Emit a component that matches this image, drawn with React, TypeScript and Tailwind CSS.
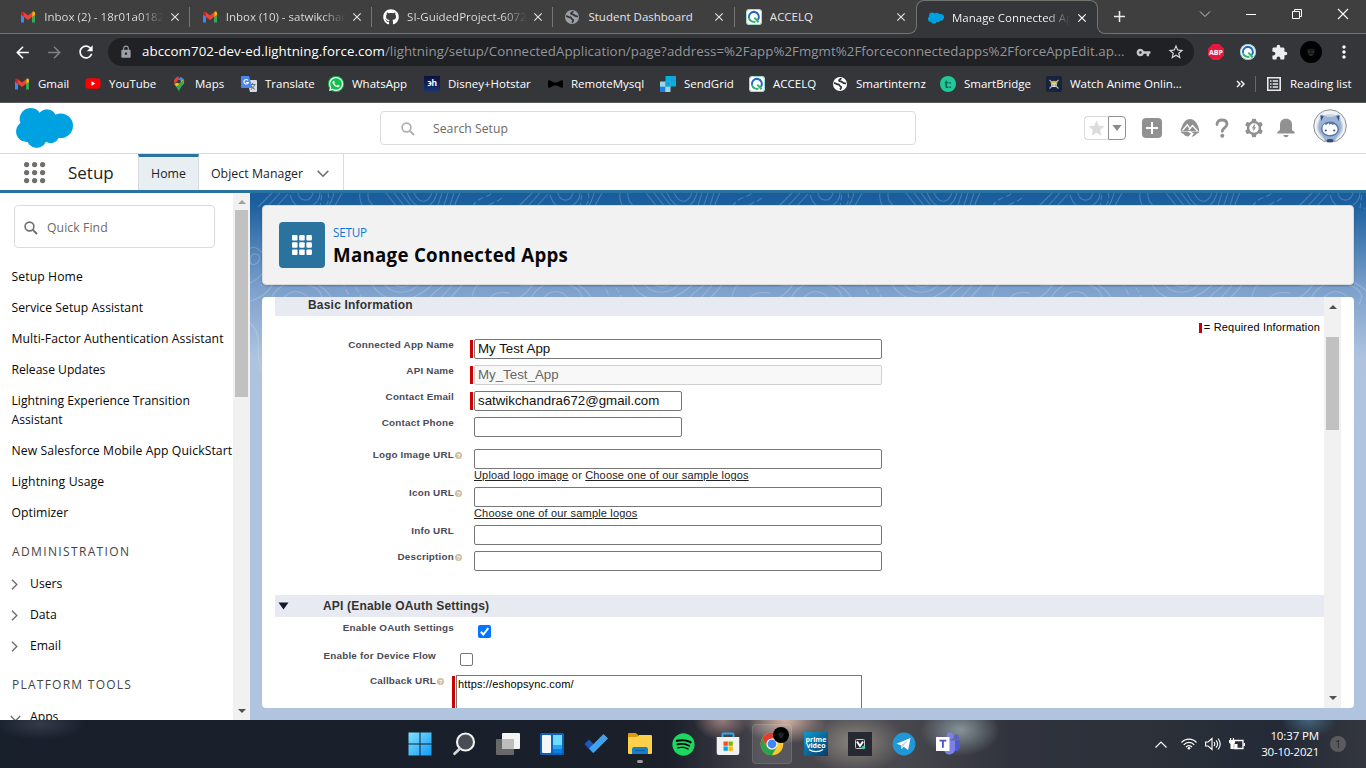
import React from "react";
import {
  MdAdd,
  MdArrowBack,
  MdArrowForward,
  MdClose,
  MdExtension,
  MdLock,
  MdMoreVert,
  MdRefresh,
  MdStar,
  MdStarBorder,
  MdVpnKey,
} from "react-icons/md";
import { FaGithub, FaSpotify, FaWhatsapp, FaYoutube } from "react-icons/fa";

/* ---------- shared glyphs ---------- */

const Gmail = () => (
  <svg width="16" height="16" viewBox="0 0 16 16">
    <path d="M1 4.500V13.500h3V7.200z" fill="#4285f4" />
    <path d="M15 4.500V13.500h-3V7.200z" fill="#34a853" />
    <path d="M12 4.200V8l3-2.300V4.200C15 2.600 13.400 2.200 12.400 3z" fill="#fbbc04" />
    <path d="M4 4.200V8L1 5.700V4.200C1 2.600 2.600 2.200 3.600 3z" fill="#c5221f" />
    <path d="M3.600 3v4.700l4.400 3.300 4.400-3.300V3L8 6.500z" fill="#ea4335" />
  </svg>
);

const Globe = ({ color }: { color: string }) => (
  <svg width="16" height="16" viewBox="0 0 16 16">
    <circle cx="8" cy="8" r="7" fill={color} />
    <path d="M2 7.200c2.200 0 2.700 1.300 4.600 1.300 1.300 0 .5 1.600 1.700 1.800 1.400.3 1 2.200-.4 3.200" fill="none" stroke="#35363a" strokeWidth="1.800" />
    <path d="M9 2.200c-.2 1.500-2 1.200-2 2.300s2 .8 3 1.500c.9.700 1.700 1.600 4 1.300" fill="none" stroke="#35363a" strokeWidth="1.800" />
  </svg>
);

const AccelQ = ({ round }: { round?: boolean }) => (
  <svg width="16" height="16" viewBox="0 0 16 16">
    <rect width="16" height="16" rx={round ? 8 : 3.5} fill="#fff" />
    <rect x=".5" y=".5" width="15" height="15" rx={round ? 7.5 : 3} fill="none" stroke="#43b69a" strokeOpacity=".5" />
    <path d="M3 9A5 5 0 1 1 11.800 11" fill="none" stroke="#2467c4" strokeWidth="2" />
    <path d="M3 9a5 5 0 0 0 6.500 3.600M8.300 8.600l4.300 4.600" fill="none" stroke="#2fb66c" strokeWidth="2" />
  </svg>
);

const Cloud = ({ w, h }: { w: number; h: number }) => (
  <svg width={w} height={h} viewBox="0 0 57 40" fill="#00a1e0">
    <circle cx="14.700" cy="11" r="11" />
    <circle cx="31" cy="10.700" r="9.500" />
    <circle cx="44.700" cy="17.700" r="12.300" />
    <circle cx="10.700" cy="23.500" r="10.600" />
    <circle cx="20.700" cy="29.500" r="10.400" />
    <circle cx="34.700" cy="26.700" r="8.500" />
    <path d="M10 10h30v20H14z" />
  </svg>
);

const Maps = () => (
  <svg width="16" height="16" viewBox="0 0 16 16">
    <path d="M8 .5a5.200 5.200 0 0 0-4 1.900l3 2.600z" fill="#ea4335" />
    <path d="M8 .5c-.5 0 4 .7 4.700 2.900L8.500 8 6 5l3.600-4.300z" fill="#4285f4" />
    <path d="M4 2.400A5.200 5.200 0 0 0 3.600 8L7 4.600z" fill="#ea4335" />
    <path d="M12.700 3.400c1 2 .3 4-1 5.600L5 10.400 3.400 8z" fill="#fbbc04" />
    <path d="M3.500 8 8 15.500c.5-3 2.500-4.500 4-7 .9-1.500 1-3.500.6-5L6 10.500z" fill="#34a853" />
    <circle cx="8" cy="5.600" r="1.900" fill="#35363a" />
  </svg>
);

const Translate = () => (
  <svg width="16" height="16" viewBox="0 0 16 16">
    <path d="M6 4h9a1 1 0 0 1 1 1v10a1 1 0 0 1-1 1H9z" fill="#d9dadd" />
    <path d="M9 8.500h5.500M11.700 7v1.500M13.600 8.500c-.5 2.500-2 4-3.600 5M10.500 10c.7 1.500 2 2.700 3.400 3.400" stroke="#66737d" fill="none" />
    <path d="M1 0h7l3.500 12H1a1 1 0 0 1-1-1V1a1 1 0 0 1 1-1z" fill="#4a86ee" />
    <path d="M7 4.300A2.300 2.300 0 1 0 7.400 6.500H5.200" stroke="#fff" strokeWidth="1.100" fill="none" />
  </svg>
);

const Hotstar = () => (
  <span className="flex h-4 w-4 items-center justify-center bg-gradient-to-b from-[#0c0f3c] to-[#1b3478] font-['Liberation_Sans'] text-[9px] font-bold tracking-[-0.5px] text-white">
    ϶h
  </span>
);

const SendGrid = () => (
  <svg width="16" height="16" viewBox="0 0 16 16">
    <path d="M5.300 0H16v10.700H5.300z" fill="#00b3e3" />
    <path d="M0 5.300h10.700V16H0z" fill="#9dd6e3" />
    <path d="M5.300 5.300h5.400v5.400H5.300zM10.700 0H16v5.300h-5.300z" fill="#1a9fd8" />
    <path d="M0 10.700h5.300V16H0z" fill="#1a82e2" />
    <path d="M0 0h5.300v5.300H0zM10.700 10.700H16V16h-5.300z" fill="#35363a" />
  </svg>
);

const Anime = () => (
  <svg width="16" height="16" viewBox="0 0 16 16">
    <rect width="16" height="16" rx="2" fill="#15233f" />
    <path d="M3.500 4l9 8.500M12.500 4l-9 8.500" stroke="#b9bab4" strokeWidth="1.100" />
    <circle cx="8" cy="8.300" r="2.800" fill="#e8e6dc" />
    <path d="M4.300 7.300c.5-3.500 6.900-3.500 7.400 0z" fill="#d9b640" />
    <path d="M6.500 9h1M8.700 9h1" stroke="#15233f" />
  </svg>
);

/* ---------- browser window ---------- */

const tabs = [
  { icon: <Gmail />, title: "Inbox (2) - 18r01a0182@", fade: true },
  { icon: <Gmail />, title: "Inbox (10) - satwikchand", fade: true },
  { icon: <FaGithub size={16} color="#fff" />, title: "SI-GuidedProject-60723", fade: true },
  { icon: <Globe color="#9aa0a6" />, title: "Student Dashboard", fade: false },
  { icon: <AccelQ />, title: "ACCELQ", fade: false },
];

function TabStrip() {
  return (
    <div className="relative flex h-[34px] shrink-0 border-b border-[#72746f] bg-[#3f3f3f] pl-[9px]">
      {tabs.map((t) => (
        <div key={t.title} className="flex w-[181.400px] items-center">
          <div className="flex w-[180px] items-center pl-[11.300px]">
            {t.icon}
            <span
              className={
                "ml-2 w-[120px] overflow-hidden whitespace-nowrap text-[11.500px] text-[#e3e5e8]" +
                (t.fade ? " bg-gradient-to-r from-[#e3e5e8] from-80% to-[#3f3f3f] bg-clip-text text-transparent" : "")
              }
            >
              {t.title}
            </span>
            <MdClose size={14} color="#dfe1e5" className="ml-[4px]" />
          </div>
          <span className={t.title === "ACCELQ" ? "h-5 w-px" : "ml-auto h-5 w-px bg-[#747678]"} />
        </div>
      ))}
      <div className="relative -mb-px flex h-[34px] w-[182px] items-center rounded-t-lg border border-b-0 border-[#72746f] bg-[#35363a] pl-[11px]">
        <span className="absolute -left-[9px] bottom-0 h-[10px] w-[9px] bg-[#35363a]">
          <span className="block h-full w-full rounded-br-lg border-r border-b border-[#72746f] bg-[#3f3f3f]" />
        </span>
        <span className="absolute -right-[9px] bottom-0 h-[10px] w-[9px] bg-[#35363a]">
          <span className="block h-full w-full rounded-bl-lg border-b border-l border-[#72746f] bg-[#3f3f3f]" />
        </span>
        <Cloud w={16} h={12} />
        <span className="ml-2 w-[118px] overflow-hidden whitespace-nowrap bg-gradient-to-r from-white from-80% to-[#35363a] bg-clip-text text-[11.500px] text-transparent">
          Manage Connected App
        </span>
        <MdClose size={14} color="#fff" className="ml-[5px]" />
      </div>
      <MdAdd size={19} color="#e8eaed" className="mt-[7px] ml-[12px]" />
      <div className="ml-auto flex h-7 items-center text-white">
        <svg className="w-[46px]" height="12" viewBox="0 0 46 12"><path d="M18 3.500l5 5 5-5" fill="none" stroke="#c8c8c8" /></svg>
        <svg className="w-[46px]" height="12" viewBox="0 0 46 12"><path d="M18 6.500h10" stroke="#fff" /></svg>
        <svg className="w-[46px]" height="12" viewBox="0 0 46 12"><path d="M18.500 3.500h7v7h-7zM20.500 3.500v-2h7v7h-2" fill="none" stroke="#fff" /></svg>
        <svg className="w-[46px]" height="12" viewBox="0 0 46 12"><path d="M18 1l10 10M28 1L18 11" fill="none" stroke="#fff" strokeWidth="1.100" /></svg>
      </div>
    </div>
  );
}

const Face = ({ size }: { size: number }) => (
  <svg width={size} height={size} viewBox="0 0 22 22">
    <circle cx="11" cy="11" r="11" fill="#020202" />
    <path d="M7 8.500c1.500-1.500 6.500-1.500 8 0l-.8 4.500c-1 2.500-5.400 2.500-6.400 0z" fill="#171c1f" />
    <path d="M8 10.500l2 .7M14 10.500l-2 .7M9.500 14h3" stroke="#4a555a" strokeWidth=".7" />
  </svg>
);

function Toolbar() {
  return (
    <div className="flex h-[36px] shrink-0 items-center bg-[#35363a] pl-[13px]">
      <MdArrowBack size={19} color="#fff" />
      <MdArrowForward size={19} color="#7d7f83" className="ml-[13px]" />
      <MdRefresh size={20} color="#fff" className="ml-[12px]" />
      <div className="ml-[12px] flex h-7 w-[1086px] shrink-0 items-center rounded-full bg-[#202124] pl-[11px]">
        <MdLock size={14} color="#9aa0a6" />
        <span className="ml-[9px] w-[986px] whitespace-nowrap text-[13.300px] tracking-[0.050px] text-[#92969b]">
          <span className="tracking-[0.070px] text-white">abccom702-dev-ed.lightning.force.com</span>
          <span className="tracking-[0.040px]">/lightning/setup/ConnectedApplication/page?address=%2Fapp%2Fmgmt%2Fforceconnectedapps%2FforceAppEdit.ap...</span>
        </span>
        <MdVpnKey size={15} color="#c6c8cb" className="ml-[8px]" />
        <MdStarBorder size={18} color="#d5d7da" className="ml-[16px]" />
      </div>
      <svg className="ml-[14px]" width="16" height="16" viewBox="0 0 16 16">
        <path d="M4.700 0h6.600L16 4.700v6.600L11.300 16H4.700L0 11.300V4.700z" fill="#e8173f" />
        <text x="8" y="10.600" textAnchor="middle" fontSize="7" fontWeight="700" fill="#fff" fontFamily="Open Sans">ABP</text>
      </svg>
      <span className="ml-4"><AccelQ round /></span>
      <MdExtension size={17} color="#eceef0" className="ml-[15px]" />
      <span className="ml-[12px]"><Face size={22} /></span>
      <MdMoreVert size={20} color="#fff" className="ml-[12px]" />
    </div>
  );
}

function Bookmark({ w, icon, label }: { w: string; icon: React.ReactNode; label: string }) {
  return (
    <div className={"flex shrink-0 items-center gap-2 whitespace-nowrap " + w}>
      <span className="flex w-4 shrink-0 justify-center">{icon}</span>
      {label}
    </div>
  );
}

function Bookmarks() {
  return (
    <div className="flex h-[33px] shrink-0 items-center border-b border-[#59595c] bg-[#35363a] pb-[5px] pl-[14px] text-[11.500px] text-white">
      <Bookmark w="w-[71px]" icon={<Gmail />} label="Gmail" />
      <Bookmark w="w-[86px]" icon={<FaYoutube size={17} color="#f00" className="bg-[linear-gradient(#fff,#fff)] bg-[length:6px_6px] bg-center bg-no-repeat" />} label="YouTube" />
      <Bookmark w="w-[70px]" icon={<Maps />} label="Maps" />
      <Bookmark w="w-[87px]" icon={<Translate />} label="Translate" />
      <Bookmark
        w="w-[96px]"
        icon={<span className="flex h-4 w-4 items-center justify-center rounded-full bg-[#10c04d]"><FaWhatsapp size={16} color="#fff" /></span>}
        label="WhatsApp"
      />
      <Bookmark w="w-[123px]" icon={<Hotstar />} label="Disney+Hotstar" />
      <Bookmark w="w-[113px]" icon={<svg width="15" height="8" viewBox="0 0 15 8"><path d="M0 1.500C0 0 1 0 2 .5l4 2h3l4-2c1-.5 2-.5 2 1v5c0 1.500-1 1.500-2 1l-4-2H6l-4 2c-1 .5-2 .5-2-1z" fill="#000" /></svg>} label="RemoteMysql" />
      <Bookmark w="w-[89px]" icon={<SendGrid />} label="SendGrid" />
      <Bookmark w="w-[83px]" icon={<AccelQ />} label="ACCELQ" />
      <Bookmark w="w-[108px]" icon={<Globe color="#fff" />} label="Smartinternz" />
      <Bookmark
        w="w-[106px]"
        icon={<span className="flex h-4 w-4 items-center justify-center rounded-full bg-[#1fc998] text-[10px] leading-none font-bold text-[#1c5a50]">t:</span>}
        label="SmartBridge"
      />
      <Bookmark w="w-[190px]" icon={<Anime />} label="Watch Anime Onlin..." />
      <svg width="9" height="8" viewBox="0 0 9 8"><path d="M1 1l3 3-3 3M5 1l3 3-3 3" stroke="#fff" strokeWidth="1.400" fill="none" /></svg>
      <span className="ml-[10px] h-4 w-px bg-[#66686c]" />
      <svg className="ml-[11px]" width="14" height="14" viewBox="0 0 14 14">
        <path d="M.8.8h12.400v12.400H.8z" fill="none" stroke="#e8eaed" strokeWidth="1.600" />
        <path d="M3 4h1.500M3 7h1.500M3 10h1.500M5.700 4H11M5.700 7H11M5.700 10H11" stroke="#e8eaed" strokeWidth="1.300" />
      </svg>
      <span className="ml-[9px] whitespace-nowrap">Reading list</span>
    </div>
  );
}

/* ---------- application header ---------- */

const SearchIcon = ({ color }: { color: string }) => (
  <svg width="14" height="14" viewBox="0 0 14 14">
    <circle cx="5.500" cy="5.500" r="4.400" fill="none" stroke={color} strokeWidth="1.600" />
    <path d="M8.800 8.800L13 13" stroke={color} strokeWidth="1.900" />
  </svg>
);

function AppHeader() {
  return (
    <div className="flex h-[51px] shrink-0 items-center border-b border-[#dddbda] bg-white pl-4">
      <Cloud w={57} h={40} />
      <div className="ml-[307px] flex h-[34px] w-[536px] items-center rounded border border-[#dddbda] pl-[20px] text-[12.200px] text-[#6b6966]">
        <span className="mt-px"><SearchIcon color="#b0adab" /></span>
        <span className="mt-[2px] ml-[18px] tracking-[0.030px]">Search Setup</span>
      </div>
      <div className="ml-[168px] flex h-6">
        <span className="flex w-6 items-center justify-center rounded-l border border-r-0 border-[#dddbda]">
          <MdStar size={19} color="#dddbda" />
        </span>
        <span className="flex w-[18px] items-center justify-center rounded-r border border-[#919191]">
          <svg width="10" height="6" viewBox="0 0 10 6"><path d="M.5 0h9L5 6z" fill="#8a8a8a" /></svg>
        </span>
      </div>
      <svg className="ml-4" width="20" height="20" viewBox="0 0 20 20">
        <rect width="20" height="20" rx="4" fill="#919191" />
        <path d="M10 4v12M4 10h12" stroke="#fff" strokeWidth="2" />
      </svg>
      <svg className="ml-[18px]" width="20" height="20" viewBox="0 0 20 20">
        <path d="M.7 13C1.700 5.500 5.800 1 10 1s8.300 4.500 9.300 12z" fill="#919191" />
        <path d="M2.500 12.500L7.300 6.800l2.500 3.600M8.800 12l3.700-4.500 5 5.500" fill="none" stroke="#fff" strokeWidth="1.300" />
        <path d="M.8 13.500h6.700l3.500 2-2.500 3c-2.500 0-4-1-5-2.800-1.700-.2-2.700-.9-2.700-2.200zM10.500 13.500h8.700c0 1.500-1 2-2.700 2.200-1 1.800-2.700 2.800-5 3l2.500-3.200z" fill="#919191" />
      </svg>
      <svg className="ml-[15px]" width="14" height="20" viewBox="0 0 14 20">
        <path d="M2 6.500C2 3.500 4 2 7 2s5 1.700 5 4.300c0 3.200-4.700 3.300-4.700 7" fill="none" stroke="#919191" strokeWidth="2.800" strokeLinecap="round" />
        <circle cx="7.300" cy="17.800" r="2" fill="#919191" />
      </svg>
      <svg className="ml-[15px]" width="20" height="20" viewBox="0 0 20 20">
        <g fill="#919191">
          <circle cx="10" cy="10" r="7.200" />
          {[0, 60, 120, 180, 240, 300].map((a) => (
            <rect key={a} x="7.800" y=".8" width="4.400" height="5" rx="1.300" transform={`rotate(${a} 10 10)`} />
          ))}
        </g>
        <circle cx="10" cy="10" r="4.700" fill="#fff" />
        <path d="M10 6.500L8 10.500h1.600L9 13.800l3-4.600h-1.700l1-2.700z" fill="#919191" />
      </svg>
      <svg className="ml-[12px]" width="20" height="20" viewBox="0 0 20 20" fill="#919191">
        <path d="M10 .7c-4 0-6 2.600-6 6v4.500c0 1-.8 1.500-2 2.300-.8.500-1 1.500-.5 2h17c.5-.5.300-1.500-.5-2-1.200-.8-2-1.300-2-2.300V6.700c0-3.400-2-6-6-6zM7.500 17h5c0 3-5 3-5 0z" />
      </svg>
      <svg className="-mt-1 ml-[17px]" width="34" height="34" viewBox="0 0 34 34">
        <circle cx="17" cy="17" r="16.300" fill="#eef1f5" stroke="#8d8f93" />
        <circle cx="17" cy="18" r="13" fill="#ccd7e6" />
        <path d="M7 6.500l2-1 5 2.300h6l5-2.300 2 1 .5 6c2 4 1.800 10-2 13l-4 7h-9l-4-7c-3.800-3-4-9-2-13z" fill="#9db3d2" />
        <path d="M7.600 6.300l3 1-2.400 5zM26.400 6.300l-3 1 2.400 5z" fill="#36558a" />
        <ellipse cx="17" cy="20" rx="9" ry="7.500" fill="#5876a6" />
        <path d="M9.500 20c0-3 1-4.700 2.500-5l1 1.200 2.500-2.200.8 1.700 2-1 1 1.300 2-.7c2.200 1 3.200 3 3.200 5 0 3.500-3.200 5.700-7.500 5.700s-7.500-2.200-7.500-6z" fill="#fff" />
        <circle cx="12.800" cy="21.500" r="1.100" fill="#3a568b" />
        <circle cx="21.200" cy="21.500" r="1.100" fill="#3a568b" />
        <path d="M13.500 31c1-1.500 6-1.500 7 0l-.5 2h-6z" fill="#2f4d85" />
      </svg>
    </div>
  );
}

function AppNav() {
  return (
    <div className="flex h-[39px] shrink-0 border-b-[3px] border-[#2a739e] bg-white text-[12.300px] text-[#222]">
      <svg className="mt-[8px] ml-6" width="22" height="22" viewBox="0 0 22 22" fill="#706e6b">
        {[2.600, 10.600, 18.600].map((y) => [2.600, 10.600, 18.600].map((x) => <circle key={`${x}-${y}`} cx={x} cy={y} r="2.600" />))}
      </svg>
      <span className="ml-[22px] w-[70px] pt-[5px] text-[17px] leading-7">Setup</span>
      <span className="flex w-[61px] justify-center border-x border-t-[3px] border-x-[#d3dbe0] border-t-[#2a739e] bg-[#e8eff3] pt-[7px] leading-[20px]">Home</span>
      <span className="flex w-[145px] border-r border-[#dddbda] pt-[10px] pl-3 leading-[20px]">
        <span className="whitespace-nowrap tracking-[0.050px]">Object Manager</span>
        <svg className="mt-[6px] ml-[14px]" width="12" height="8" viewBox="0 0 12 8"><path d="M.7.900L6 6.300 11.300.900" fill="none" stroke="#706e6b" strokeWidth="1.500" /></svg>
      </span>
    </div>
  );
}

/* ---------- sidebar ---------- */

const Arrow = ({ up, color = "#505050" }: { up?: boolean; color?: string }) => (
  <svg width="8" height="4" viewBox="0 0 8 4"><path d={up ? "M0 4h8L4 0z" : "M0 0h8L4 4z"} fill={color} /></svg>
);

const Expand = ({ label }: { label: string }) => (
  <div className="flex h-[31px] items-center">
    <svg className="mt-[2px] -ml-px" width="7" height="11" viewBox="0 0 7 11"><path d="M1 .8l4.800 4.700L1 10.200" fill="none" stroke="#706e6b" strokeWidth="1.400" /></svg>
    <span className="mt-[2px] ml-[12px]">{label}</span>
  </div>
);

function Sidebar() {
  return (
    <div className="flex w-[250px] shrink-0 overflow-hidden bg-white">
      <div className="w-[233px] shrink-0 pl-3 text-[12.200px] whitespace-nowrap text-[#080707]">
        <div className="mt-3 ml-[2px] flex h-[43px] w-[201px] items-center rounded border border-[#dddbda] pl-[9px] text-[#6b6966]">
          <span className="mt-[3px]"><SearchIcon color="#706e6b" /></span>
          <span className="mt-[3px] ml-[9px] tracking-[0.100px]">Quick Find</span>
        </div>
        <div className="mt-[13px] -ml-[0.500px] leading-[31px]">
          <div className="tracking-[0.100px]">Setup Home</div>
          <div className="tracking-[0.040px]">Service Setup Assistant</div>
          <div className="tracking-[0.070px]">Multi-Factor Authentication Assistant</div>
          <div className="tracking-[-0.040px]">Release Updates</div>
          <div className="pt-[6px] pb-[6px] leading-[19px]">Lightning Experience Transition<br />Assistant</div>
          <div className="tracking-[0.100px]">New Salesforce Mobile App QuickStart</div>
          <div className="tracking-[0.150px]">Lightning Usage</div>
          <div className="tracking-[0.050px]">Optimizer</div>
        </div>
        <div className="mt-[14px] text-[12px] leading-5 tracking-[1.360px] text-[#444]">ADMINISTRATION</div>
        <div className="mt-[6px]">
          <Expand label="Users" />
          <Expand label="Data" />
          <Expand label="Email" />
        </div>
        <div className="mt-[14px] text-[12px] leading-5 tracking-[1.250px] text-[#444]">PLATFORM TOOLS</div>
        <div className="mt-[6px] flex h-[31px] items-center">
          <svg className="mt-[4px] -ml-[2px]" width="11" height="7" viewBox="0 0 11 7"><path d="M.8 1l4.700 4.800L10.200 1" fill="none" stroke="#706e6b" strokeWidth="1.400" /></svg>
          <span className="mt-[2px] ml-[9px]">Apps</span>
        </div>
      </div>
      <div className="flex w-[17px] flex-col items-center bg-[#f1f1f1] pt-[7px] pb-[7px]">
        <Arrow up color="#a0a0a0" />
        <div className="mt-[6px] h-[187px] w-[13px] bg-[#c1c1c1]" />
        <div className="mt-auto"><Arrow /></div>
      </div>
    </div>
  );
}

/* ---------- setup page ---------- */

const Contours = () => (
  <svg className="absolute inset-0 h-full w-full" fill="none" stroke="#fff" strokeOpacity=".2" strokeWidth="1.100">
    <defs>
      <pattern id="contours" width="260" height="260" patternUnits="userSpaceOnUse">
        <path d="M8 14L22 0M17 14L30 0M26 14L38 1" />
        <path d="M40 2c4 12 10 14 18 12s12-8 12-14M48 0c2 9 12 10 15 0" />
        <path d="M78 0c2 6 0 10-4 16M70 15l2-15" strokeDasharray="5 3" />
        <path d="M84 0c-2 7-3 10-7 16M92 0L82 18M130 18C116 8 118 4 118 0M110 0c-2 12 6 14 4 20" />
        <path d="M136 0l16 20M144 0l16 20M151 0l14 18M157 0c8 18 24 20 30 0M164 0c6 12 14 10 18 0M192 0l-6 18M198 0l-6 18M204 0l-6 18M210 0c-4 8-6 12-6 20" />
        <path d="M222 14c8-12 14-8 20-14M232 18c8-10 18-8 22-16" strokeDasharray="6 3" />
        <path d="M0 90c18-8 20-26 8-34S-8 70 0 90M3 72c8-2 9-10 3-11s-8 10-3 11M0 108c24-6 36-34 28-60" />
        <path d="M20 112c0-12 14-26 32-22s24 12 16 22M30 112c4-12 14-16 22-12s8 8 6 12M40 112c0-8 8-8 10 0M10 92c16 2 20-4 34-6s36 8 40 26" />
        <path d="M92 88c4 10 10 16 8 26M102 86c2 10 12 14 10 28" strokeDasharray="6 3" />
        <path d="M120 88c10 20 36 28 62 4M132 88c8 14 28 16 40 0M142 88c6 8 14 8 20 0M176 112c4-14 20-18 22-26M186 112c4-10 16-14 18-26M196 112c4-10 12-12 18-24" />
        <path d="M222 112c-2-12 4-22 14-24s14 4 24 2M238 112c0-10 8-14 22-12M248 112l12-4" />
        <path d="M0 130c14 12 4 30 12 50M244 150c8-12 12 0 16 10M2 200c8-8 12 10 4 20" />
        <path d="M236 30c10 8 14 18 24 20M240 60c12 4 10 18 20 20" />
      </pattern>
      <linearGradient id="fade" x1="0" x2="0" y1="0" y2="1">
        <stop offset="0" stopColor="#fff" />
        <stop offset=".28" stopColor="#fff" />
        <stop offset=".4" stopColor="#000" />
      </linearGradient>
      <mask id="fadeMask"><rect width="100%" height="100%" fill="url(#fade)" stroke="none" /></mask>
    </defs>
    <rect width="100%" height="100%" fill="url(#contours)" stroke="none" mask="url(#fadeMask)" />
  </svg>
);

const Help = () => (
  <span className="ml-[1px] flex h-[7px] w-[7px] items-center justify-center rounded-full bg-[#cdbfa3] text-[6px] leading-none font-bold text-white">?</span>
);

interface RowProps {
  label: string;
  h: string;
  help?: boolean;
  required?: boolean;
  children: React.ReactNode;
}

function Row({ label, h, help, required, children }: RowProps) {
  return (
    <div className={"flex items-start " + h}>
      <span className="w-[179px] text-right text-[9.900px] leading-[12px] font-bold tracking-[0.200px] whitespace-nowrap text-[#4a4a56]">{label}</span>
      <span className="flex w-[20px]">
        {help && <span className="mt-[3px]"><Help /></span>}
        {required && <span className="mt-[1px] mr-[1px] ml-auto h-[18px] w-[3px] bg-[#c00]" />}
      </span>
      <div>{children}</div>
    </div>
  );
}

const Field = ({ value = "", wide, disabled }: { value?: string; wide?: boolean; disabled?: boolean }) => (
  <div
    className={
      "flex h-[20px] items-center rounded-[2px] border pl-[3px] text-[13.300px] " +
      (wide ? "w-[408px] " : "w-[208px] ") +
      (disabled ? "border-[#cfcfcf] bg-[#f8f8f8] text-[#666]" : "border-[#767676] bg-white text-[#111]")
    }
  >
    {value}
  </div>
);

function ConnectedAppForm() {
  return (
    <div className="h-full w-[1049px] shrink-0 overflow-hidden font-['Liberation_Sans',sans-serif] text-[#222]">
      <div className="h-[19px] bg-[#e8eaf2] pl-[33px] text-[12px] leading-[16px] font-bold tracking-[0.200px] text-[#333]">Basic Information</div>
      <div className="flex h-[23px] items-center justify-end pr-1 text-[11px] text-black">
        <span className="mr-[2px] h-[10px] w-[3px] bg-[#c00]" />
        <span className="tracking-[0.180px]">= Required Information</span>
      </div>
      <Row label="Connected App Name" h="h-[26px]" required><Field wide value="My Test App" /></Row>
      <Row label="API Name" h="h-[26px]" required><Field wide disabled value="My_Test_App" /></Row>
      <Row label="Contact Email" h="h-[26px]" required><Field value="satwikchandra672@gmail.com" /></Row>
      <Row label="Contact Phone" h="h-[32px]"><Field /></Row>
      <Row label="Logo Image URL" h="h-[38px]" help>
        <Field wide />
        <div className="text-[11px] leading-[13px] tracking-[0.170px]"><u>Upload logo image</u> or <u>Choose one of our sample logos</u></div>
      </Row>
      <Row label="Icon URL" h="h-[38px]" help>
        <Field wide />
        <div className="text-[11px] leading-[13px] tracking-[0.170px]"><u>Choose one of our sample logos</u></div>
      </Row>
      <Row label="Info URL" h="h-[26px]"><Field wide /></Row>
      <Row label="Description" h="h-[44px]" help><Field wide /></Row>
      <div className="flex h-[22px] items-center bg-[#e8eaf2] pl-[3px] text-[12px] font-bold tracking-[0.180px] text-[#333]">
        <svg width="11" height="8" viewBox="0 0 11 8"><path d="M.5.500h10L5.500 7.500z" fill="#15162b" /></svg>
        <span className="ml-[34px]">API (Enable OAuth Settings)</span>
      </div>
      <div className="pt-[5px]">
        <Row label="Enable OAuth Settings" h="h-[28px]">
          <svg className="mt-[3px] ml-1" width="13" height="13" viewBox="0 0 13 13">
            <rect width="13" height="13" rx="2" fill="#0075ff" />
            <path d="M2.800 6.800l2.500 2.700 5-6.300" fill="none" stroke="#fff" strokeWidth="2" />
          </svg>
        </Row>
        <div className="-ml-[18px]">
          <Row label="Enable for Device Flow" h="h-[25px]">
            <div className="mt-[3px] ml-1 h-[13px] w-[13px] rounded-[2px] border border-[#767676] bg-white" />
          </Row>
          <div className="flex items-start">
            <span className="w-[179px] text-right text-[9.900px] leading-[12px] font-bold tracking-[0.200px] text-[#4a4a56]">Callback URL</span>
            <span className="mt-[3px] w-[16px]"><Help /></span>
            <span className="mt-px h-[40px] w-[3px] bg-[#c00]" />
            <div className="ml-px h-[45px] w-[406px] border border-[#767676] pt-[2px] pl-[1px] text-[11px] leading-[13px] tracking-[0.150px] text-black">https://eshopsync.com/</div>
          </div>
        </div>
      </div>
    </div>
  );
}

function SetupPage() {
  return (
    <div className="relative flex min-w-0 flex-1 flex-col bg-[linear-gradient(180deg,#195b9b_0px,#1d61a0_12px,#7ca0cc_95px,#afc3df_165px,#b0c4df_100%)] pt-3 pr-3 pb-3 pl-3">
      <Contours />
      <div className="relative flex h-20 shrink-0 rounded border border-[#dddbda] bg-[#f2f2f2] pt-4 pl-4 shadow-[0_1px_2px_rgba(0,0,0,0.25)]">
        <span className="flex h-[46px] w-[46px] items-center justify-center rounded bg-[#2a739e]">
          <svg width="20" height="20" viewBox="0 0 20 20" fill="#fff">
            {[0, 7.200, 14.400].map((y) => [0, 7.200, 14.400].map((x) => <rect key={`${x}-${y}`} x={x} y={y} width="5.500" height="5.500" rx="1" />))}
          </svg>
        </span>
        <div className="ml-2">
          <div className="mt-[2px] text-[11.700px] leading-[17px] tracking-[-0.200px] text-[#0e75d3]">SETUP</div>
          <div className="text-[18.700px] leading-[28px] font-bold tracking-[0.280px] text-[#080707]">Manage Connected Apps</div>
        </div>
      </div>
      <div className="relative mt-3 flex h-[411px] shrink-0 overflow-hidden rounded bg-white pl-[13px]">
        <ConnectedAppForm />
        <div className="flex w-[17px] flex-col items-center bg-[#f1f1f1] pt-2 pb-2">
          <Arrow up />
          <div className="mt-[28px] h-[93px] w-[13px] bg-[#c1c1c1]" />
          <div className="mt-auto"><Arrow /></div>
        </div>
      </div>
    </div>
  );
}

/* ---------- taskbar ---------- */

const TaskItem = ({ children, active }: { children: React.ReactNode; active?: boolean }) => (
  <span className={"flex h-10 w-[44px] items-center justify-center"}>
    <span className={active ? "relative flex h-10 w-10 items-center justify-center rounded border border-white/10 bg-white/10" : "relative flex h-10 w-10 items-center justify-center"}>
      {children}
    </span>
  </span>
);

function Taskbar() {
  return (
    <div className="flex h-12 shrink-0 items-center overflow-hidden bg-[radial-gradient(45px_16px_at_40px_4px,#343a49,transparent),radial-gradient(28px_20px_at_722px_0px,#977c7b,transparent),radial-gradient(42px_24px_at_785px_0px,#d8b5a6,transparent),radial-gradient(50px_32px_at_855px_22px,#8d877f,transparent),radial-gradient(40px_26px_at_960px_10px,#87939a,transparent),radial-gradient(28px_18px_at_1309px_0px,#426279,transparent),linear-gradient(90deg,#18202c_0%,#1a1f2a_45%,#1c202b_49%,#46454c_56%,#48484e_66%,#30333d_74%,#2b3039_85%,#232a36_94%,#33363e_100%)] pl-[397.500px] text-white">
      <TaskItem>
        <svg width="24" height="24" viewBox="0 0 24 24">
          <defs><linearGradient id="win" x1="0" y1="0" x2="1" y2="1" gradientUnits="objectBoundingBox"><stop stopColor="#7fe2ff" /><stop offset="1" stopColor="#129bf6" /></linearGradient></defs>
          <path d="M.5.500h11v11H.5zM12.500.5h11v11h-11zM.5 12.500h11v11H.5zM12.500 12.500h11v11h-11z" fill="url(#win)" />
        </svg>
      </TaskItem>
      <TaskItem>
        <svg width="24" height="24" viewBox="0 0 24 24">
          <circle cx="13.500" cy="10" r="8.500" fill="#474c55" stroke="#f2f2f2" strokeWidth="2.100" />
          <path d="M7.500 17l-5 4.800" stroke="#d6d6d6" strokeWidth="2.700" strokeLinecap="round" />
        </svg>
      </TaskItem>
      <TaskItem>
        <svg width="26" height="24" viewBox="0 0 26 24">
          <rect x="7" y="1" width="18" height="16" rx="1" fill="#f4f4f4" />
          <rect x="1" y="7" width="18" height="16" rx="1" fill="#686868" />
          <path d="M7 7h12v10H7z" fill="#bdbdbd" />
        </svg>
      </TaskItem>
      <TaskItem>
        <svg width="24" height="24" viewBox="0 0 24 24">
          <rect y="1" width="24" height="22" rx="1.500" fill="#0c62ba" />
          <rect x="2" y="3" width="9" height="18" rx="1" fill="#f7f7f7" />
          <path d="M13 3h9v10h-9z" fill="#6bdcff" /><path d="M13 13h9v4h-9z" fill="#25a6f2" /><path d="M13 17h9v4h-9z" fill="#0a7fe0" />
        </svg>
      </TaskItem>
      <TaskItem>
        <svg width="26" height="24" viewBox="0 0 26 24">
          <path d="M1.500 12l4.500-4.500 8 8-4.500 5.500z" fill="#1a59bf" />
          <path d="M6 16.500L20.500 2l4.500 4.500L10.500 21z" fill="#41a2ee" />
        </svg>
      </TaskItem>
      <TaskItem>
        <svg width="26" height="24" viewBox="0 0 26 24">
          <path d="M1 2a1 1 0 0 1 1-1h7l2 2v4H1z" fill="#e09a0a" />
          <path d="M1 5h9l2-2h12a1 1 0 0 1 1 1v17a1 1 0 0 1-1 1H2a1 1 0 0 1-1-1z" fill="#ffd04a" />
          <path d="M5 22v-5a2 2 0 0 1 2-2h12a2 2 0 0 1 2 2v5z" fill="#157fc8" />
          <path d="M8 18.500h10" stroke="#0d5c9c" />
        </svg>
        <span className="absolute bottom-[1px] h-[3px] w-[6px] rounded bg-[#9a9ca0]" />
      </TaskItem>
      <TaskItem><span className="flex h-5 w-5 items-center justify-center rounded-full bg-black"><FaSpotify size={23} color="#1ed760" className="shrink-0" /></span></TaskItem>
      <TaskItem>
        <svg width="24" height="24" viewBox="0 0 24 24">
          <path d="M6.500 6V2.500a1 1 0 0 1 1-1h9a1 1 0 0 1 1 1V6" fill="none" stroke="#2aaaf0" strokeWidth="2" />
          <path d="M.7 5h22.600v16a2 2 0 0 1-2 2H2.700a2 2 0 0 1-2-2z" fill="#f1f1f2" />
          <path d="M7.500 9.500h4.300v4.300H7.500z" fill="#f25022" /><path d="M12.500 9.500h4.300v4.300h-4.300z" fill="#7fba00" />
          <path d="M7.500 14.500h4.300v4.300H7.500z" fill="#00a4ef" /><path d="M12.500 14.500h4.300v4.300h-4.300z" fill="#ffb900" />
        </svg>
      </TaskItem>
      <TaskItem active>
        <svg width="24" height="24" viewBox="0 0 24 24">
          <circle cx="12" cy="12" r="11.300" fill="#f9c930" />
          <path d="M2.200 6.350A11.300 11.300 0 0 1 21.800 6.350H12L7.100 14.800z" fill="#e33b2e" />
          <path d="M2.200 6.350A11.300 11.300 0 0 0 12 23.300l4.900-8.500L12 17l-4.900-2.200z" fill="#2ba24c" />
          <circle cx="12" cy="12" r="5.600" fill="#fff" />
          <circle cx="12" cy="12" r="4.400" fill="#4285f4" />
        </svg>
        <span className="absolute top-[2px] left-[20px]"><Face size={16} /></span>
      </TaskItem>
      <TaskItem>
        <span className="flex h-6 w-6 flex-col items-center bg-gradient-to-br from-[#0c9bd0] to-[#0a3a67] pt-[2px]">
          <svg width="22" height="20" viewBox="0 0 22 20">
            <text x="11" y="7.500" textAnchor="middle" fontSize="7" fontWeight="700" fill="#fff" fontFamily="Open Sans">
              prime
              <tspan x="11" dy="6.200">video</tspan>
            </text>
            <path d="M4 15.500c4 2.800 10 2.800 14 0" fill="none" stroke="#fff" strokeWidth="1.200" />
          </svg>
        </span>
      </TaskItem>
      <TaskItem>
        <svg width="24" height="24" viewBox="0 0 24 24">
          <path d="M0 0h24v24H0z" fill="#272932" />
          <rect x="7.500" y="7.500" width="9" height="9" rx="1" fill="none" stroke="#c9c9c9" />
          <path d="M9 9.500l3 4.500 3-4.500" fill="none" stroke="#fff" strokeWidth="2" />
          <circle cx="15.500" cy="15.500" r="1.800" fill="#3fcfb4" />
        </svg>
      </TaskItem>
      <TaskItem>
        <svg width="24" height="24" viewBox="0 0 24 24">
          <circle cx="12" cy="12" r="11.400" fill="#2297d5" />
          <path d="M4.500 11.700L18.500 6l-2.400 12-4.400-3.200-2.200 2.300-.6-3.900z" fill="#fff" />
          <path d="M8.900 13.200l7-4.700-4.800 5.700-1.600 2.900z" fill="#b8d7ea" />
        </svg>
      </TaskItem>
      <TaskItem>
        <svg width="26" height="24" viewBox="0 0 26 24">
          <circle cx="21.500" cy="5" r="2.500" fill="#5b62c7" /><circle cx="15" cy="4" r="3.400" fill="#7b83eb" />
          <path d="M18 8.500h7v6.500a4 4 0 0 1-6 3.500z" fill="#5059c9" />
          <path d="M9.500 8.500H20v8.500a5.600 5.600 0 0 1-10.500 2.500z" fill="#7b83eb" />
          <path d="M1 5h13.500v14H1z" fill="#fff" />
          <path d="M4.500 8.700h6.800M7.900 8.700v7" stroke="#4b53bc" strokeWidth="1.800" />
        </svg>
      </TaskItem>
      <div className="ml-auto flex items-center">
        <svg width="12" height="7" viewBox="0 0 12 7"><path d="M.5 6.500L6 1l5.500 5.500" fill="none" stroke="#fff" strokeWidth="1.200" /></svg>
        <svg className="ml-[14px]" width="16" height="12" viewBox="0 0 16 12" fill="none" stroke="#fff" strokeWidth="1.200">
          <path d="M.5 4.500c4-4.600 11-4.600 15 0M2.700 6.800c3-3.300 7.600-3.300 10.600 0M5 9c1.700-1.800 4.300-1.800 6 0" />
          <circle cx="8" cy="10.300" r="1.300" fill="#fff" stroke="none" />
        </svg>
        <svg className="ml-2" width="16" height="14" viewBox="0 0 16 14" fill="none" stroke="#fff" strokeWidth="1.100">
          <path d="M.6 5h2.500L7 1.500v11L3.100 9H.6zM9 5c.9 1.200.9 2.800 0 4M11 3.300c1.900 2.200 1.900 5.200 0 7.400M13 1.500c2.700 3.300 2.700 7.700 0 11" />
        </svg>
        <svg className="ml-2" width="17" height="14" viewBox="0 0 17 14">
          <path d="M5 3.500h9v8H5z" fill="none" stroke="#fff" strokeWidth="1.300" />
          <path d="M14.500 6H16v3h-1.500zM5.500 7h3v4h-3zM0 3h6v2.500L4.500 7v5h-3V7L0 5.500zM1 1h1.200v2H1zM3.800 1H5v2H3.800z" fill="#fff" />
        </svg>
        <div className="ml-[15px] w-[58px] text-right text-[11.500px] leading-4 whitespace-nowrap">
          <div className="tracking-[-0.120px]">10:37 PM</div>
          <div className="tracking-[-0.220px]">30-10-2021</div>
        </div>
        <span className="mr-5 ml-[11px] flex h-4 w-4 items-center justify-center rounded-full bg-[#5a5b5d] text-[10px] leading-none text-[#1c1d20]">1</span>
      </div>
    </div>
  );
}

export default function App() {
  return (
    <div className="flex h-[768px] w-[1366px] flex-col overflow-hidden bg-white font-['Open_Sans','Noto_Sans',sans-serif]">
      <TabStrip />
      <Toolbar />
      <Bookmarks />
      <AppHeader />
      <AppNav />
      <div className="flex min-h-0 flex-1">
        <Sidebar />
        <SetupPage />
      </div>
      <Taskbar />
    </div>
  );
}
